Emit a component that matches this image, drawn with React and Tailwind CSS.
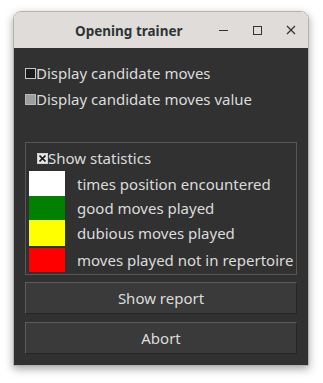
const font = { fontFamily: '"Noto Sans", "Open Sans", sans-serif' }

function CheckBox({ state }) {
  if (state === 'checked') {
    return (
      <span className="flex h-[11px] w-[11px] shrink-0 items-center justify-center border border-[#cfcfcf] bg-[#e6e6e6]">
        <svg width="7" height="7" viewBox="0 0 7 7">
          <path d="M0.5 0.5L6.5 6.5M6.5 0.5L0.5 6.5" stroke="#1c1c1c" strokeWidth="1.6" />
        </svg>
      </span>
    )
  }
  if (state === 'disabled') {
    return <span className="h-[11px] w-[11px] shrink-0 border border-[#b8b8b8] bg-[#9e9e9e]" />
  }
  return <span className="h-[11px] w-[11px] shrink-0 border border-[#c8c8c8] bg-[#1b1b1b]" />
}

const legend = [
  ['bg-[#ffffff]', 'times position encountered', 'h-[25px]'],
  ['bg-[#008000]', 'good moves played', 'h-[24px]'],
  ['bg-[#ffff00]', 'dubious moves played', 'h-[26px] mb-[2px]'],
  ['bg-[#ff0000]', 'moves played not in repertoire', 'h-[24px]'],
]

export default function App() {
  return (
    <div className="h-[383px] w-[323px] bg-white pl-[13px] pt-[11px]" style={font}>
      <div className="flex h-[355px] w-[296px] flex-col overflow-hidden rounded-t-[8px] border border-[#b4b2b0] shadow-[0_3px_9px_rgba(0,0,0,0.35)]">
        <div className="relative flex h-[36px] shrink-0 items-center bg-[#dfdcd9]">
          <span className="absolute left-[61px] top-[9px] whitespace-nowrap text-[13.5px] font-bold leading-[20px] text-[#2e3436]">
            Opening trainer
          </span>
          <div className="ml-auto flex items-center">
            <span className="flex h-[20px] w-[34px] items-center justify-center">
              <span className="h-[1px] w-[9px] bg-[#2e3436]" />
            </span>
            <span className="flex h-[20px] w-[34px] items-center justify-center">
              <span className="h-[9px] w-[9px] border border-[#2e3436]" />
            </span>
            <span className="flex h-[20px] w-[34px] items-center justify-center">
              <svg width="10" height="10" viewBox="0 0 10 10">
                <path d="M1 1L9 9M9 1L1 9" stroke="#2e3436" strokeWidth="1.2" />
              </svg>
            </span>
          </div>
        </div>
        <div className="flex flex-1 flex-col bg-[#313131] px-[11px] pb-[10px] text-[15px] leading-[20px] text-[#dcdcdc]">
          <div className="mt-[15px] flex items-center">
            <CheckBox />
            <span className="whitespace-nowrap">Display candidate moves</span>
          </div>
          <div className="mt-[6px] flex items-center">
            <CheckBox state="disabled" />
            <span className="whitespace-nowrap">Display candidate moves value</span>
          </div>
          <div className="mt-[33px] flex flex-col border border-[#575757] px-[3px] pb-[2px]">
            <div className="mt-[5px] flex items-center pl-[8px]">
              <CheckBox state="checked" />
              <span className="whitespace-nowrap">Show statistics</span>
            </div>
            <div className="mt-[3px] flex flex-col">
              {legend.map(([color, label, h]) => (
                <div key={label} className={`flex items-center ${h}`}>
                  <span className={`h-full w-[36px] shrink-0 ${color}`} />
                  <span className="ml-[12px] whitespace-nowrap">{label}</span>
                </div>
              ))}
            </div>
          </div>
          <button className="mt-[7px] h-[32px] border border-[#5c5c5c] border-b-[#262626] border-r-[#262626] bg-[#3a3a3b] text-[15px] text-[#dcdcdc]">
            Show report
          </button>
          <button className="mt-[8px] h-[32px] border border-[#5c5c5c] border-b-[#262626] border-r-[#262626] bg-[#3a3a3b] text-[15px] text-[#dcdcdc]">
            Abort
          </button>
        </div>
      </div>
    </div>
  )
}
